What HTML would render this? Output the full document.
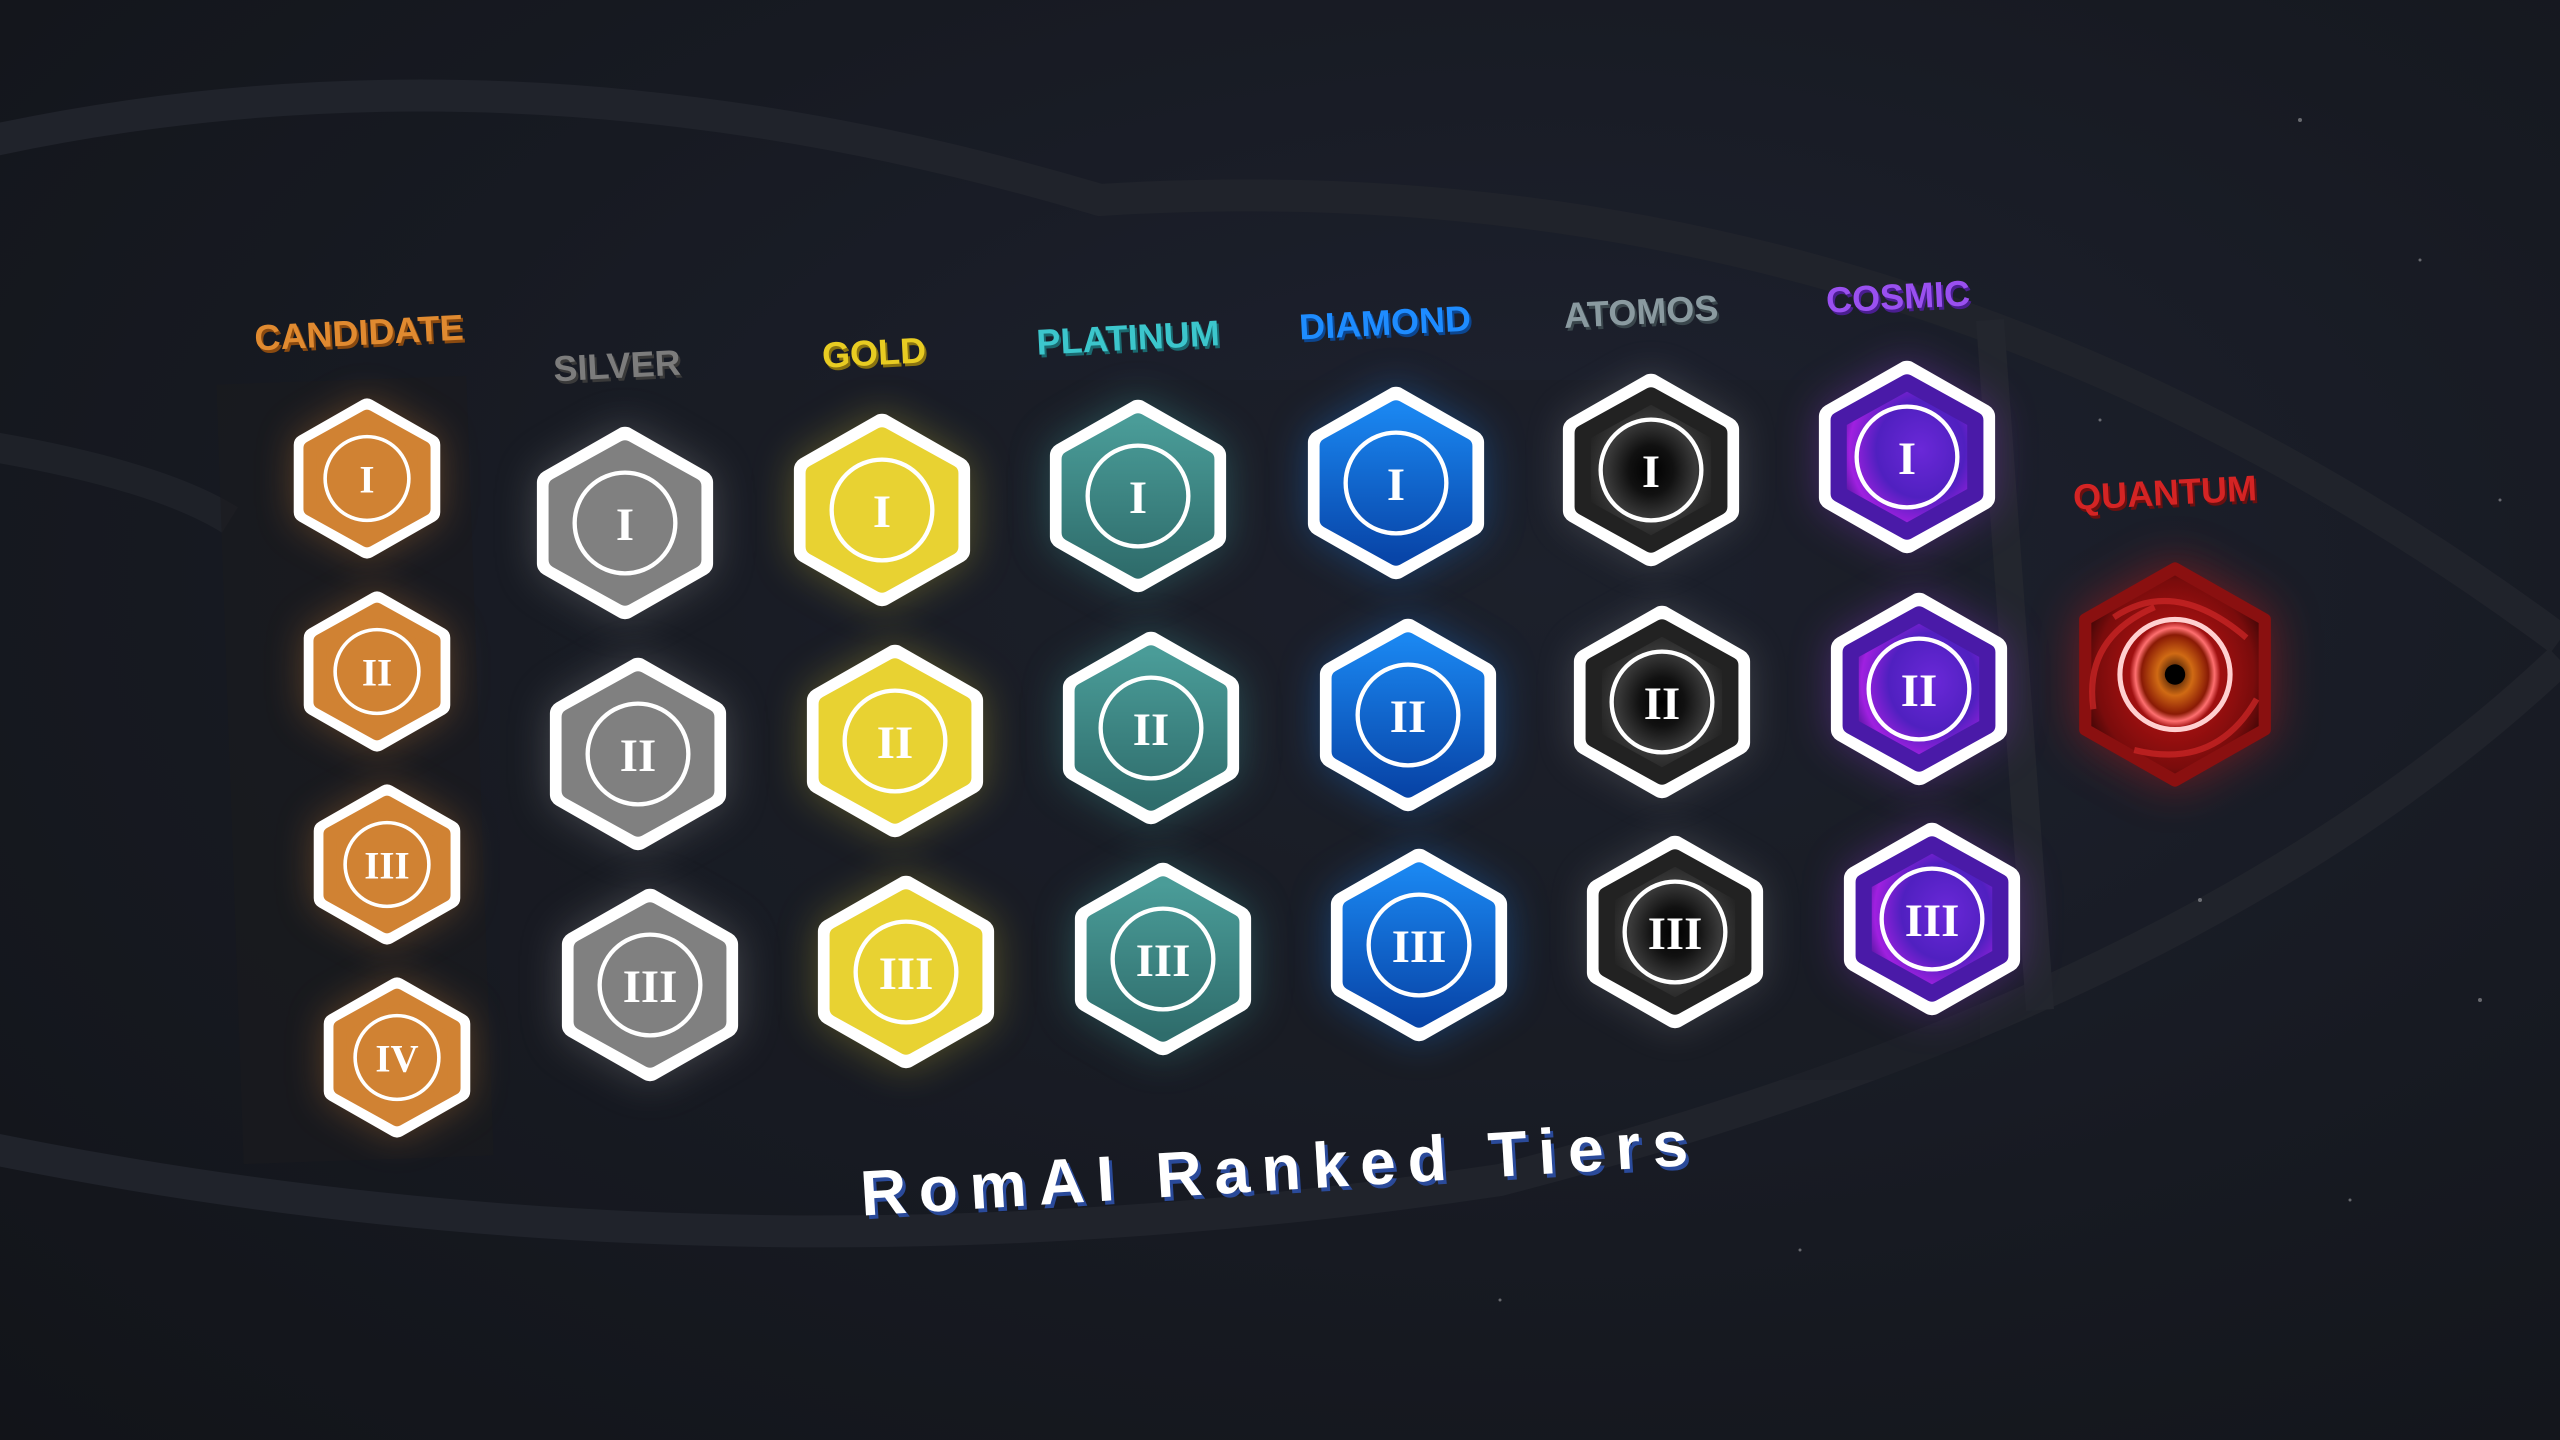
<!DOCTYPE html>
<html><head><meta charset="utf-8"><style>
html,body{margin:0;padding:0}
body{width:2560px;height:1440px;overflow:hidden;position:relative;background:radial-gradient(ellipse at 60% 40%,#1e2230 0%,#171a22 55%,#121419 100%);font-family:"Liberation Sans",sans-serif}
.b{position:absolute;overflow:visible}
.lb{position:absolute;font-family:"Liberation Sans",sans-serif;font-weight:bold;font-size:36px;transform:translate(-50%,-50%) rotate(-3deg);white-space:nowrap}
.n{font-family:"Liberation Serif",serif;font-weight:bold;fill:#fff;text-anchor:middle}
</style></head><body>
<svg width="2560" height="1440" style="position:absolute;left:0;top:0">
<path d="M-50 150 Q 500 20 1100 200 Q 1900 150 2560 640" fill="none" stroke="#20232b" stroke-width="32"/>
<path d="M-50 1140 Q 700 1300 1500 1180 Q 2200 1000 2560 660" fill="none" stroke="#20232b" stroke-width="32"/>
<path d="M-50 440 Q 150 470 230 520" fill="none" stroke="#1e2128" stroke-width="30"/>
<path d="M1990 320 L2040 1010" fill="none" stroke="#23262e" stroke-width="28"/>
<rect x="230" y="380" width="250" height="780" fill="#1a1a1e" opacity=".6" transform="rotate(-2 355 770)"/>
<rect x="500" y="380" width="1480" height="700" fill="#1b1d22" opacity=".35"/>
<g fill="#fff" opacity=".35"><circle cx="2300" cy="120" r="2"/><circle cx="2420" cy="260" r="1.5"/><circle cx="2200" cy="900" r="2"/><circle cx="2350" cy="1200" r="1.5"/><circle cx="2480" cy="1000" r="2"/><circle cx="1800" cy="1250" r="1.5"/><circle cx="2100" cy="420" r="1.5"/><circle cx="1500" cy="1300" r="1.5"/><circle cx="2500" cy="500" r="1.5"/></g>
</svg>
<svg width="0" height="0" style="position:absolute"><defs>
<linearGradient id="gPl" x1="0" y1="0" x2="0" y2="1"><stop offset="0" stop-color="#4a9c98"/><stop offset="1" stop-color="#2f6d6c"/></linearGradient>
<linearGradient id="gDi" x1="0" y1="0" x2="0" y2="1"><stop offset="0" stop-color="#1a86f0"/><stop offset="1" stop-color="#0845a8"/></linearGradient>
<radialGradient id="gAt" cx="50%" cy="50%" r="55%"><stop offset="0" stop-color="#000"/><stop offset=".3" stop-color="#111"/><stop offset=".6" stop-color="#3a3a3a"/><stop offset="1" stop-color="#1a1a1a"/></radialGradient>
<radialGradient id="gCo" cx="60%" cy="45%" r="65%"><stop offset="0" stop-color="#6a28d8"/><stop offset=".5" stop-color="#5020c0"/><stop offset=".8" stop-color="#a020e0"/><stop offset="1" stop-color="#3a148a"/></radialGradient>
<radialGradient id="gQu" cx="50%" cy="50%" r="55%"><stop offset="0" stop-color="#1a0500"/><stop offset=".18" stop-color="#d06a14"/><stop offset=".34" stop-color="#8a1a05"/><stop offset=".4" stop-color="#ff7070"/><stop offset=".46" stop-color="#a01010"/><stop offset=".8" stop-color="#7a0c0c"/><stop offset="1" stop-color="#3a0606"/></radialGradient>
<g id="hexO"><polygon points="50,8 92,32 92,77 50,101 8,77 8,32" fill="#fff" stroke="#fff" stroke-width="14" stroke-linejoin="round"/></g>
</defs></svg>

<div class="lb" style="left:359px;top:333px;color:#e08a30;text-shadow:2px 3px 0 #8a4a10">CANDIDATE</div>
<div class="lb" style="left:617px;top:366px;color:#7c7c7c;text-shadow:2px 3px 0 #3a3a3a">SILVER</div>
<div class="lb" style="left:874px;top:353px;color:#e8cc22;text-shadow:2px 3px 0 #8a7410">GOLD</div>
<div class="lb" style="left:1128px;top:338px;color:#3cc6cc;text-shadow:2px 3px 0 #1a6a70">PLATINUM</div>
<div class="lb" style="left:1385px;top:323px;color:#1e8cff;text-shadow:2px 3px 0 #0c4690">DIAMOND</div>
<div class="lb" style="left:1641px;top:312px;color:#8a9aa0;text-shadow:2px 3px 0 #3a464c">ATOMOS</div>
<div class="lb" style="left:1898px;top:297px;color:#9a50f0;text-shadow:2px 3px 0 #4a1e90">COSMIC</div>
<div class="lb" style="left:2165px;top:493px;color:#d42424;text-shadow:2px 3px 0 #6a1010">QUANTUM</div>

<!-- Candidate -->
<svg class="b" viewBox="0 0 100 109" style="left:292px;top:397px;width:150px;height:163px;filter:drop-shadow(0 0 18px rgba(208,130,51,.35))"><use href="#hexO"/><polygon points="50,13 88,34 88,75 50,96 12,75 12,34" fill="#d08233" stroke="#d08233" stroke-width="9" stroke-linejoin="round"/><circle cx="50" cy="54.5" r="28" fill="none" stroke="#fff" stroke-width="2.4"/><text class="n" x="50" y="64" font-size="26">I</text></svg>
<svg class="b" viewBox="0 0 100 109" style="left:302px;top:590px;width:150px;height:163px;filter:drop-shadow(0 0 18px rgba(208,130,51,.35))"><use href="#hexO"/><polygon points="50,13 88,34 88,75 50,96 12,75 12,34" fill="#d08233" stroke="#d08233" stroke-width="9" stroke-linejoin="round"/><circle cx="50" cy="54.5" r="28" fill="none" stroke="#fff" stroke-width="2.4"/><text class="n" x="50" y="64" font-size="26">II</text></svg>
<svg class="b" viewBox="0 0 100 109" style="left:312px;top:783px;width:150px;height:163px;filter:drop-shadow(0 0 18px rgba(208,130,51,.35))"><use href="#hexO"/><polygon points="50,13 88,34 88,75 50,96 12,75 12,34" fill="#d08233" stroke="#d08233" stroke-width="9" stroke-linejoin="round"/><circle cx="50" cy="54.5" r="28" fill="none" stroke="#fff" stroke-width="2.4"/><text class="n" x="50" y="64" font-size="26">III</text></svg>
<svg class="b" viewBox="0 0 100 109" style="left:322px;top:976px;width:150px;height:163px;filter:drop-shadow(0 0 18px rgba(208,130,51,.35))"><use href="#hexO"/><polygon points="50,13 88,34 88,75 50,96 12,75 12,34" fill="#d08233" stroke="#d08233" stroke-width="9" stroke-linejoin="round"/><circle cx="50" cy="54.5" r="28" fill="none" stroke="#fff" stroke-width="2.4"/><text class="n" x="50" y="64" font-size="26">IV</text></svg>

<!-- Silver -->
<svg class="b" viewBox="0 0 100 109" style="left:535px;top:425px;width:180px;height:196px;filter:drop-shadow(0 0 20px rgba(200,200,200,.25))"><use href="#hexO"/><polygon points="50,13 88,34 88,75 50,96 12,75 12,34" fill="#808080" stroke="#808080" stroke-width="9" stroke-linejoin="round"/><circle cx="50" cy="54.5" r="28" fill="none" stroke="#fff" stroke-width="2.4"/><text class="n" x="50" y="64" font-size="26">I</text></svg>
<svg class="b" viewBox="0 0 100 109" style="left:548px;top:656px;width:180px;height:196px;filter:drop-shadow(0 0 20px rgba(200,200,200,.25))"><use href="#hexO"/><polygon points="50,13 88,34 88,75 50,96 12,75 12,34" fill="#808080" stroke="#808080" stroke-width="9" stroke-linejoin="round"/><circle cx="50" cy="54.5" r="28" fill="none" stroke="#fff" stroke-width="2.4"/><text class="n" x="50" y="64" font-size="26">II</text></svg>
<svg class="b" viewBox="0 0 100 109" style="left:560px;top:887px;width:180px;height:196px;filter:drop-shadow(0 0 20px rgba(200,200,200,.25))"><use href="#hexO"/><polygon points="50,13 88,34 88,75 50,96 12,75 12,34" fill="#808080" stroke="#808080" stroke-width="9" stroke-linejoin="round"/><circle cx="50" cy="54.5" r="28" fill="none" stroke="#fff" stroke-width="2.4"/><text class="n" x="50" y="64" font-size="26">III</text></svg>

<!-- Gold -->
<svg class="b" viewBox="0 0 100 109" style="left:792px;top:412px;width:180px;height:196px;filter:drop-shadow(0 0 20px rgba(232,210,50,.3))"><use href="#hexO"/><polygon points="50,13 88,34 88,75 50,96 12,75 12,34" fill="#e8d232" stroke="#e8d232" stroke-width="9" stroke-linejoin="round"/><circle cx="50" cy="54.5" r="28" fill="none" stroke="#fff" stroke-width="2.4"/><text class="n" x="50" y="64" font-size="26">I</text></svg>
<svg class="b" viewBox="0 0 100 109" style="left:805px;top:643px;width:180px;height:196px;filter:drop-shadow(0 0 20px rgba(232,210,50,.3))"><use href="#hexO"/><polygon points="50,13 88,34 88,75 50,96 12,75 12,34" fill="#e8d232" stroke="#e8d232" stroke-width="9" stroke-linejoin="round"/><circle cx="50" cy="54.5" r="28" fill="none" stroke="#fff" stroke-width="2.4"/><text class="n" x="50" y="64" font-size="26">II</text></svg>
<svg class="b" viewBox="0 0 100 109" style="left:816px;top:874px;width:180px;height:196px;filter:drop-shadow(0 0 20px rgba(232,210,50,.3))"><use href="#hexO"/><polygon points="50,13 88,34 88,75 50,96 12,75 12,34" fill="#e8d232" stroke="#e8d232" stroke-width="9" stroke-linejoin="round"/><circle cx="50" cy="54.5" r="28" fill="none" stroke="#fff" stroke-width="2.4"/><text class="n" x="50" y="64" font-size="26">III</text></svg>

<!-- Platinum -->
<svg class="b" viewBox="0 0 100 109" style="left:1048px;top:398px;width:180px;height:196px;filter:drop-shadow(0 0 20px rgba(70,170,165,.35))"><use href="#hexO"/><polygon points="50,13 88,34 88,75 50,96 12,75 12,34" fill="url(#gPl)" stroke="url(#gPl)" stroke-width="9" stroke-linejoin="round"/><circle cx="50" cy="54.5" r="28" fill="none" stroke="#fff" stroke-width="2.4"/><text class="n" x="50" y="64" font-size="26">I</text></svg>
<svg class="b" viewBox="0 0 100 109" style="left:1061px;top:630px;width:180px;height:196px;filter:drop-shadow(0 0 20px rgba(70,170,165,.35))"><use href="#hexO"/><polygon points="50,13 88,34 88,75 50,96 12,75 12,34" fill="url(#gPl)" stroke="url(#gPl)" stroke-width="9" stroke-linejoin="round"/><circle cx="50" cy="54.5" r="28" fill="none" stroke="#fff" stroke-width="2.4"/><text class="n" x="50" y="64" font-size="26">II</text></svg>
<svg class="b" viewBox="0 0 100 109" style="left:1073px;top:861px;width:180px;height:196px;filter:drop-shadow(0 0 20px rgba(70,170,165,.35))"><use href="#hexO"/><polygon points="50,13 88,34 88,75 50,96 12,75 12,34" fill="url(#gPl)" stroke="url(#gPl)" stroke-width="9" stroke-linejoin="round"/><circle cx="50" cy="54.5" r="28" fill="none" stroke="#fff" stroke-width="2.4"/><text class="n" x="50" y="64" font-size="26">III</text></svg>

<!-- Diamond -->
<svg class="b" viewBox="0 0 100 109" style="left:1306px;top:385px;width:180px;height:196px;filter:drop-shadow(0 0 20px rgba(30,130,240,.35))"><use href="#hexO"/><polygon points="50,13 88,34 88,75 50,96 12,75 12,34" fill="url(#gDi)" stroke="url(#gDi)" stroke-width="9" stroke-linejoin="round"/><circle cx="50" cy="54.5" r="28" fill="none" stroke="#fff" stroke-width="2.4"/><text class="n" x="50" y="64" font-size="26">I</text></svg>
<svg class="b" viewBox="0 0 100 109" style="left:1318px;top:617px;width:180px;height:196px;filter:drop-shadow(0 0 20px rgba(30,130,240,.35))"><use href="#hexO"/><polygon points="50,13 88,34 88,75 50,96 12,75 12,34" fill="url(#gDi)" stroke="url(#gDi)" stroke-width="9" stroke-linejoin="round"/><circle cx="50" cy="54.5" r="28" fill="none" stroke="#fff" stroke-width="2.4"/><text class="n" x="50" y="64" font-size="26">II</text></svg>
<svg class="b" viewBox="0 0 100 109" style="left:1329px;top:847px;width:180px;height:196px;filter:drop-shadow(0 0 20px rgba(30,130,240,.35))"><use href="#hexO"/><polygon points="50,13 88,34 88,75 50,96 12,75 12,34" fill="url(#gDi)" stroke="url(#gDi)" stroke-width="9" stroke-linejoin="round"/><circle cx="50" cy="54.5" r="28" fill="none" stroke="#fff" stroke-width="2.4"/><text class="n" x="50" y="64" font-size="26">III</text></svg>

<!-- Atomos -->
<svg class="b" viewBox="0 0 100 109" style="left:1561px;top:372px;width:180px;height:196px;filter:drop-shadow(0 0 18px rgba(200,200,200,.2))"><use href="#hexO"/><polygon points="50,13 88,34 88,75 50,96 12,75 12,34" fill="url(#gAt)" stroke="#222" stroke-width="9" stroke-linejoin="round"/><circle cx="50" cy="54.5" r="28" fill="none" stroke="#fff" stroke-width="2.4"/><text class="n" x="50" y="64" font-size="26">I</text></svg>
<svg class="b" viewBox="0 0 100 109" style="left:1572px;top:604px;width:180px;height:196px;filter:drop-shadow(0 0 18px rgba(200,200,200,.2))"><use href="#hexO"/><polygon points="50,13 88,34 88,75 50,96 12,75 12,34" fill="url(#gAt)" stroke="#222" stroke-width="9" stroke-linejoin="round"/><circle cx="50" cy="54.5" r="28" fill="none" stroke="#fff" stroke-width="2.4"/><text class="n" x="50" y="64" font-size="26">II</text></svg>
<svg class="b" viewBox="0 0 100 109" style="left:1585px;top:834px;width:180px;height:196px;filter:drop-shadow(0 0 18px rgba(200,200,200,.2))"><use href="#hexO"/><polygon points="50,13 88,34 88,75 50,96 12,75 12,34" fill="url(#gAt)" stroke="#222" stroke-width="9" stroke-linejoin="round"/><circle cx="50" cy="54.5" r="28" fill="none" stroke="#fff" stroke-width="2.4"/><text class="n" x="50" y="64" font-size="26">III</text></svg>

<!-- Cosmic -->
<svg class="b" viewBox="0 0 100 109" style="left:1817px;top:359px;width:180px;height:196px;filter:drop-shadow(0 0 20px rgba(150,60,230,.35))"><use href="#hexO"/><polygon points="50,13 88,34 88,75 50,96 12,75 12,34" fill="url(#gCo)" stroke="#4a1aa8" stroke-width="9" stroke-linejoin="round"/><circle cx="50" cy="54.5" r="28" fill="none" stroke="#fff" stroke-width="2.4"/><text class="n" x="50" y="64" font-size="26">I</text></svg>
<svg class="b" viewBox="0 0 100 109" style="left:1829px;top:591px;width:180px;height:196px;filter:drop-shadow(0 0 20px rgba(150,60,230,.35))"><use href="#hexO"/><polygon points="50,13 88,34 88,75 50,96 12,75 12,34" fill="url(#gCo)" stroke="#4a1aa8" stroke-width="9" stroke-linejoin="round"/><circle cx="50" cy="54.5" r="28" fill="none" stroke="#fff" stroke-width="2.4"/><text class="n" x="50" y="64" font-size="26">II</text></svg>
<svg class="b" viewBox="0 0 100 109" style="left:1842px;top:821px;width:180px;height:196px;filter:drop-shadow(0 0 20px rgba(150,60,230,.35))"><use href="#hexO"/><polygon points="50,13 88,34 88,75 50,96 12,75 12,34" fill="url(#gCo)" stroke="#4a1aa8" stroke-width="9" stroke-linejoin="round"/><circle cx="50" cy="54.5" r="28" fill="none" stroke="#fff" stroke-width="2.4"/><text class="n" x="50" y="64" font-size="26">III</text></svg>

<!-- Quantum -->
<svg class="b" viewBox="0 0 100 116" style="left:2073px;top:556px;width:204px;height:237px;filter:drop-shadow(0 0 24px rgba(220,30,30,.45))"><polygon points="50,6 94,31 94,85 50,110 6,85 6,31" fill="url(#gQu)" stroke="#8a1010" stroke-width="6" stroke-linejoin="round"/><path d="M20 30 Q50 10 85 40 M90 70 Q70 105 30 95 M10 75 Q5 40 40 25" fill="none" stroke="#d02828" stroke-width="3" opacity=".7"/><circle cx="50" cy="58" r="27" fill="none" stroke="#ffd0d0" stroke-width="2.5"/><circle cx="50" cy="58" r="5" fill="#000"/></svg>

<div style="position:absolute;left:1280px;top:1168px;transform:translate(-50%,-50%) rotate(-3.5deg);font-family:'Liberation Sans',sans-serif;font-weight:bold;font-size:64px;letter-spacing:12px;color:#fff;text-shadow:3px 4px 0 #2a4a9a;white-space:nowrap">RomAI Ranked Tiers</div>
</body></html>
